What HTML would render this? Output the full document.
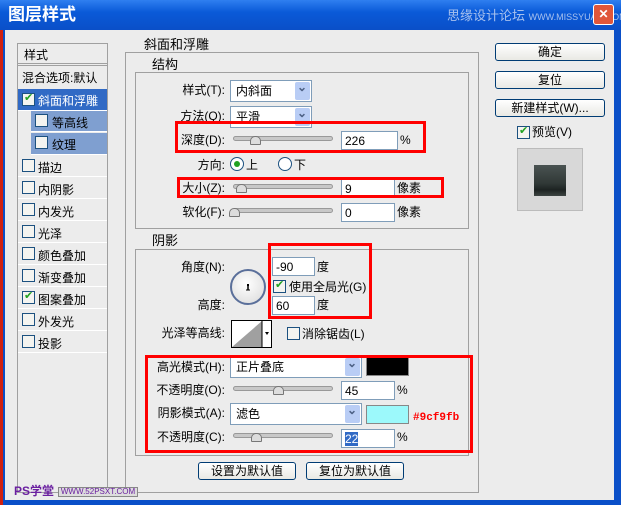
<!DOCTYPE html><html><head><meta charset="utf-8"><style>
*{margin:0;padding:0;box-sizing:border-box}
body{width:621px;height:505px;overflow:hidden;background:#0a4fc8;font:12px "Liberation Sans","Noto Sans CJK SC",sans-serif;color:#000;position:relative}
.a{position:absolute;white-space:nowrap}
.t{position:absolute;white-space:nowrap;line-height:14px}
.r{text-align:right}
.gb{position:absolute;border:1px solid #a0a0a0}
.gt{position:absolute;background:#ececec;padding:0 4px;font-size:13px;line-height:14px}
.inp{position:absolute;background:#fff;border:1px solid #7f9db9;height:19px;padding:2px 3px;line-height:14px}
.dd{position:absolute;background:#fff;border:1px solid #7f9db9;height:22px;padding:3px 5px;line-height:14px}
.dd:after{content:"";position:absolute;right:1px;top:1px;width:15px;height:18px;background:#b9cdf5;border-radius:2px}
.dd:before{content:"⌄";position:absolute;right:4px;top:-1px;color:#4d6185;font-weight:bold;z-index:2}
.sl{position:absolute;height:5px;background:#c8c8c8;border:1px solid #999;border-radius:3px}
.th{position:absolute;width:11px;height:9px;background:#ddd;border:1px solid #777;border-radius:5px 5px 1px 1px}
.btn{position:absolute;border:1px solid #003c74;border-radius:3px;background:linear-gradient(#fff,#e9e9e4);text-align:center;line-height:16px;height:18px}
.cb{position:absolute;width:13px;height:13px;border:1px solid #1c5180;background:#f4f4f0}
.ck:after{content:"✔";position:absolute;left:1px;top:-3px;font-size:11px;color:#21a121}
.rb{position:absolute;border:3px solid #f00}
.li{position:absolute;left:18px;width:89px;height:22px;border-bottom:1px solid #fff}
</style></head><body>
<div class="a" style="left:0;top:0;width:621px;height:30px;background:linear-gradient(#2f7ff0,#0a5ad8 40%,#0a4fc8)"></div>
<div class="t" style="left:8px;top:6px;font-size:17px;font-weight:bold;color:#fff;line-height:18px">图层样式</div>
<div class="t" style="left:447px;top:9px;font-size:13px;color:#a7c1ee">思缘设计论坛 <span style="font-size:9px">WWW.MISSYUAN.COM</span></div>
<div class="a" style="left:593px;top:4px;width:21px;height:21px;background:#e0563a;border:1px solid #fff;border-radius:3px;color:#fff;text-align:center;font-weight:bold;line-height:19px">✕</div>
<div class="a" style="left:0;top:30px;width:3px;height:475px;background:#d02010"></div>
<div class="a" style="left:5px;top:30px;width:609px;height:470px;background:#ececec"></div>

<div class="a" style="left:17px;top:43px;width:91px;height:450px;border:1px solid #a0a0a0;background:#ececec"></div>
<div class="li" style="top:44px;height:22px;border-bottom:3px double #a0a0a0;padding:2px 6px">样式</div>
<div class="li" style="top:67px;padding:2px 4px;height:23px">混合选项:默认</div>
<div class="li" style="top:89px;background:#316ac5;color:#fff;padding:3px 0 0 20px">斜面和浮雕</div>
<div class="cb ck" style="left:22px;top:93px"></div>
<div class="a" style="left:31px;top:111px;width:76px;height:21px;background:#7f9fd0;padding:3px 0 0 21px;border-bottom:1px solid #fff">等高线</div>
<div class="cb" style="left:35px;top:114px"></div>
<div class="a" style="left:31px;top:133px;width:76px;height:22px;background:#7f9fd0;padding:3px 0 0 21px;border-bottom:1px solid #fff">纹理</div>
<div class="cb" style="left:35px;top:136px"></div>
<div class="li" style="top:155px;padding:4px 0 0 20px">描边</div><div class="cb" style="left:22px;top:159px"></div>
<div class="li" style="top:177px;padding:4px 0 0 20px">内阴影</div><div class="cb" style="left:22px;top:181px"></div>
<div class="li" style="top:199px;padding:4px 0 0 20px">内发光</div><div class="cb" style="left:22px;top:203px"></div>
<div class="li" style="top:221px;padding:4px 0 0 20px">光泽</div><div class="cb" style="left:22px;top:225px"></div>
<div class="li" style="top:243px;padding:4px 0 0 20px">颜色叠加</div><div class="cb" style="left:22px;top:247px"></div>
<div class="li" style="top:265px;padding:4px 0 0 20px">渐变叠加</div><div class="cb" style="left:22px;top:269px"></div>
<div class="li" style="top:287px;padding:4px 0 0 20px">图案叠加</div><div class="cb ck" style="left:22px;top:291px"></div>
<div class="li" style="top:309px;padding:4px 0 0 20px">外发光</div><div class="cb" style="left:22px;top:313px"></div>
<div class="li" style="top:331px;padding:4px 0 0 20px">投影</div><div class="cb" style="left:22px;top:335px"></div>

<div class="gb" style="left:125px;top:52px;width:354px;height:441px"></div>
<div class="gt" style="left:140px;top:38px">斜面和浮雕</div>
<div class="gb" style="left:135px;top:72px;width:334px;height:157px"></div>
<div class="gt" style="left:148px;top:58px">结构</div>
<div class="gb" style="left:135px;top:249px;width:334px;height:207px"></div>
<div class="gt" style="left:148px;top:234px">阴影</div>

<div class="t r" style="left:150px;width:75px;top:83px">样式(T):</div><div class="dd" style="left:230px;top:80px;width:82px">内斜面</div>
<div class="t r" style="left:150px;width:75px;top:109px">方法(Q):</div><div class="dd" style="left:230px;top:106px;width:82px">平滑</div>
<div class="t r" style="left:150px;width:75px;top:133px">深度(D):</div><div class="sl" style="left:233px;top:136px;width:100px"></div><div class="th" style="left:250px;top:136px"></div><div class="inp" style="left:341px;top:131px;width:57px">226</div><div class="t" style="left:400px;top:133px">%</div>
<div class="t r" style="left:150px;width:75px;top:158px">方向:</div>
<div class="a" style="left:230px;top:157px;width:14px;height:14px;border:1px solid #1c5180;border-radius:50%;background:#fff"><div class="a" style="left:3px;top:3px;width:6px;height:6px;border-radius:50%;background:#21a121"></div></div><div class="t" style="left:246px;top:158px">上</div>
<div class="a" style="left:278px;top:157px;width:14px;height:14px;border:1px solid #1c5180;border-radius:50%;background:#fff"></div><div class="t" style="left:294px;top:158px">下</div>
<div class="t r" style="left:150px;width:75px;top:181px">大小(Z):</div><div class="sl" style="left:233px;top:184px;width:100px"></div><div class="th" style="left:236px;top:184px"></div><div class="inp" style="left:341px;top:179px;width:54px">9</div><div class="t" style="left:397px;top:181px">像素</div>
<div class="t r" style="left:150px;width:75px;top:205px">软化(F):</div><div class="sl" style="left:233px;top:208px;width:100px"></div><div class="th" style="left:229px;top:208px"></div><div class="inp" style="left:341px;top:203px;width:54px">0</div><div class="t" style="left:397px;top:205px">像素</div>

<div class="t r" style="left:140px;width:85px;top:260px">角度(N):</div>
<div class="a" style="left:230px;top:269px;width:36px;height:36px;border:2px solid #5a6f9a;border-radius:50%;background:radial-gradient(circle at 45% 40%,#fff,#e4e4e4 70%,#cfcfcf)"><svg width="32" height="32" style="position:absolute;left:0;top:0"><line x1="16" y1="14" x2="16" y2="19" stroke="#000" stroke-width="1.5"/><line x1="14" y1="19" x2="18" y2="19" stroke="#000"/><rect x="15" y="13" width="2" height="2" fill="#000"/></svg></div>
<div class="inp" style="left:272px;top:257px;width:43px">-90</div><div class="t" style="left:317px;top:260px">度</div>
<div class="cb ck" style="left:273px;top:280px"></div><div class="t" style="left:289px;top:280px">使用全局光(G)</div>
<div class="t r" style="left:140px;width:85px;top:298px">高度:</div>
<div class="inp" style="left:272px;top:296px;width:43px">60</div><div class="t" style="left:317px;top:298px">度</div>
<div class="t r" style="left:140px;width:85px;top:326px">光泽等高线:</div>
<div class="a" style="left:231px;top:320px;width:41px;height:28px;border:1px solid #000;background:#fff"><svg width="39" height="26" style="position:absolute;left:0;top:0"><polygon points="0,26 30,0 30,26" fill="#a0a0a0"/><line x1="30" y1="0" x2="30" y2="26" stroke="#000"/><polygon points="33,11 37,11 35,14" fill="#000"/></svg></div>
<div class="cb" style="left:287px;top:327px"></div><div class="t" style="left:302px;top:327px">消除锯齿(L)</div>

<div class="t r" style="left:140px;width:85px;top:360px">高光模式(H):</div><div class="dd" style="left:230px;top:356px;width:132px">正片叠底</div><div class="a" style="left:366px;top:357px;width:43px;height:19px;background:#000;border:1px solid #888"></div>
<div class="t r" style="left:140px;width:85px;top:383px">不透明度(O):</div><div class="sl" style="left:233px;top:386px;width:100px"></div><div class="th" style="left:273px;top:386px"></div><div class="inp" style="left:341px;top:381px;width:54px">45</div><div class="t" style="left:397px;top:383px">%</div>
<div class="t r" style="left:140px;width:85px;top:406px">阴影模式(A):</div><div class="dd" style="left:230px;top:403px;width:132px">滤色</div><div class="a" style="left:366px;top:405px;width:43px;height:19px;background:#9cf9fb;border:1px solid #888"></div>
<div class="t" style="left:413px;top:412px;color:#f00;font:bold 11px 'Liberation Mono',monospace">#9cf9fb</div>
<div class="t r" style="left:140px;width:85px;top:430px">不透明度(C):</div><div class="sl" style="left:233px;top:433px;width:100px"></div><div class="th" style="left:251px;top:433px"></div><div class="inp" style="left:341px;top:429px;width:54px"><span style="background:#316ac5;color:#fff">22</span></div><div class="t" style="left:397px;top:430px">%</div>

<div class="rb" style="left:175px;top:121px;width:251px;height:32px"></div>
<div class="rb" style="left:177px;top:177px;width:267px;height:21px"></div>
<div class="rb" style="left:268px;top:243px;width:104px;height:76px"></div>
<div class="rb" style="left:145px;top:355px;width:328px;height:98px"></div>

<div class="btn" style="left:198px;top:462px;width:98px">设置为默认值</div>
<div class="btn" style="left:306px;top:462px;width:98px">复位为默认值</div>

<div class="btn" style="left:495px;top:43px;width:110px">确定</div>
<div class="btn" style="left:495px;top:71px;width:110px">复位</div>
<div class="btn" style="left:495px;top:99px;width:110px">新建样式(W)...</div>
<div class="cb ck" style="left:517px;top:126px"></div><div class="t" style="left:532px;top:125px">预览(V)</div>
<div class="a" style="left:517px;top:148px;width:66px;height:63px;background:#d8d8d8;border:1px solid #bbb"><div class="a" style="left:16px;top:16px;width:32px;height:31px;background:linear-gradient(#4a5352,#303836 60%,#1d2322 80%,#3c4442)"></div></div>

<div class="t" style="left:14px;top:484px;color:#6a1fa0;font-weight:bold;font-size:12px">PS学堂</div>
<div class="a" style="left:58px;top:487px;width:80px;height:10px;border:1px solid #888;background:#ddd;color:#6a1fa0;font-size:8px;line-height:8px;text-align:center">WWW.52PSXT.COM</div>
</body></html>
